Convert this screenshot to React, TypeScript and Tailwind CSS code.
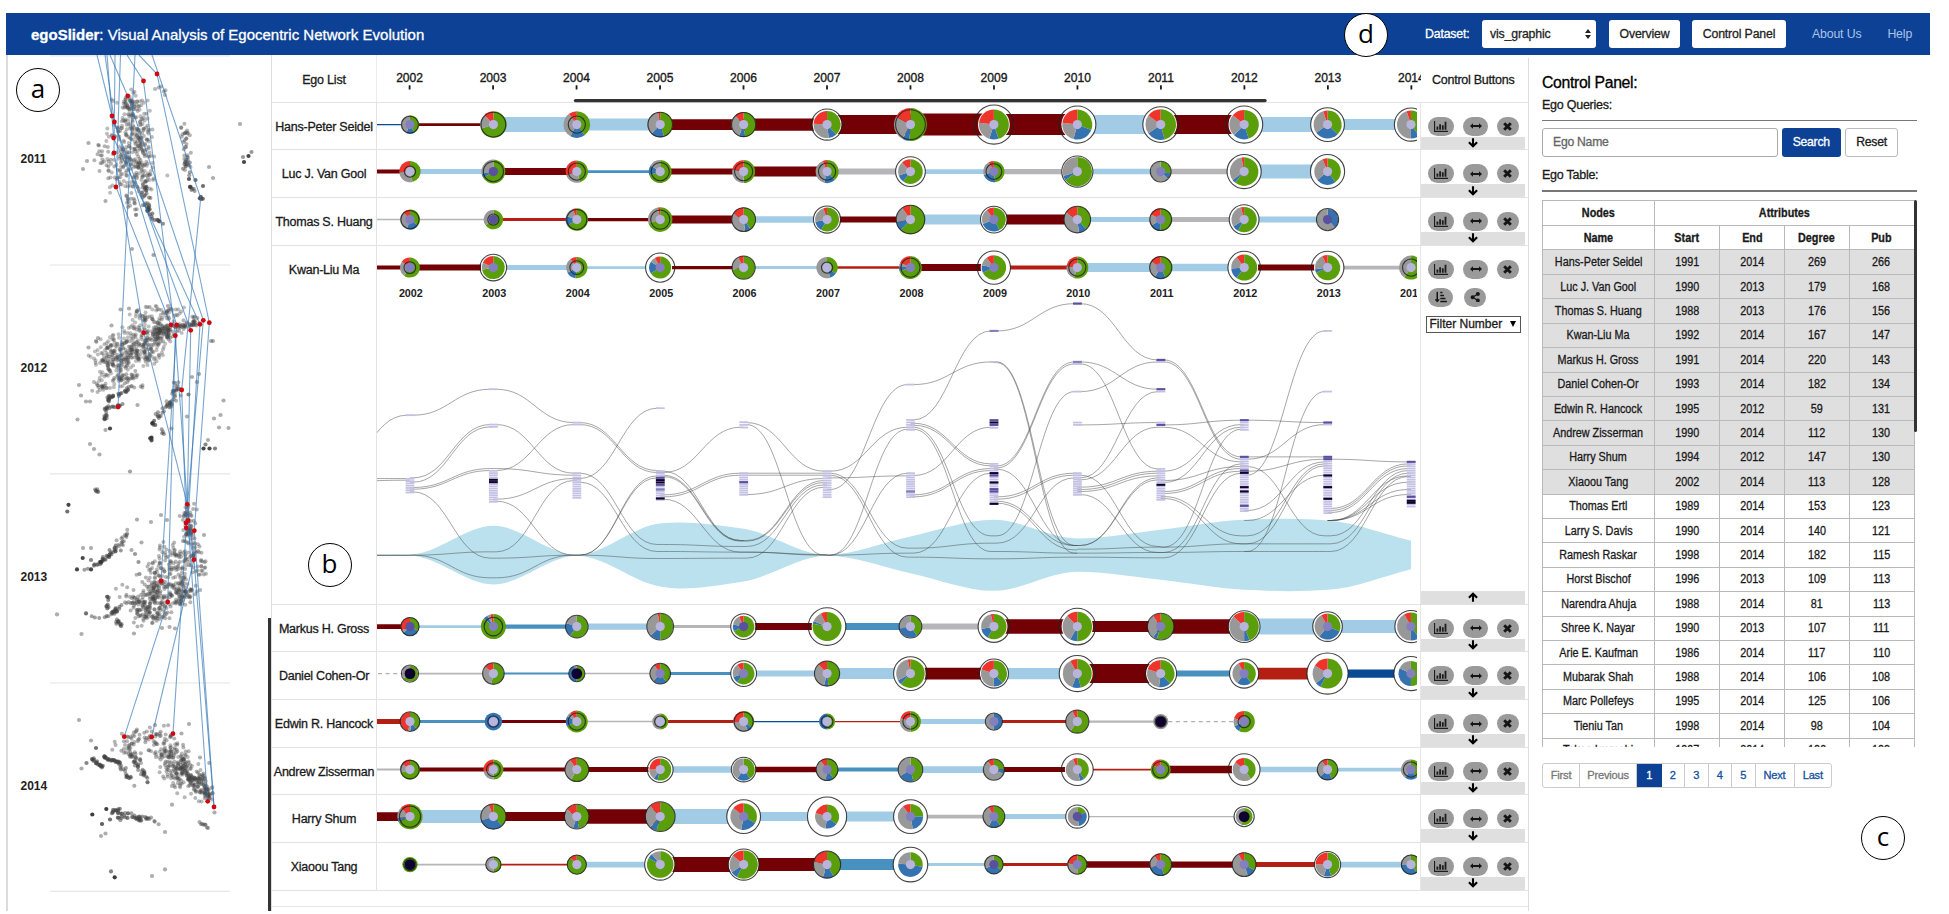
import React from "react";
import { FaShareAlt, FaSortAmountDownAlt } from "react-icons/fa";

type Tone = "L" | "M" | "D" | "K";
type LinkKind = "lb" | "mb" | "db" | "dr" | "rd" | "gy" | "da" | "";
// radius, outline radius, green, blue, grey, red, core tone, link kind, link width
type Glyph = [number, number, number, number, number, number, Tone, LinkKind, number];

const TONE: Record<Tone, string> = { L: "#b8b5dd", M: "#8480bf", D: "#5a50a0", K: "#10002f" };
const LINK: Record<string, string> = {
  lb: "#a2cbe5", mb: "#4790c0", db: "#0a4a93", dr: "#720004", rd: "#b31f12", gy: "#b6b5b7", da: "#b0b0b0",
};
const SLICE = ["#5a9e0b", "#3572b0", "#989898", "#ee352c"];
const YEARS = [2002, 2003, 2004, 2005, 2006, 2007, 2008, 2009, 2010, 2011, 2012, 2013, 2014];
const yx = (i: number) => 409.6 + 83.48 * i;

interface Ego { name: string; lead: [LinkKind, number]; glyphs: (Glyph | null)[] }

const EGOS: Ego[] = [
  { name: "Hans-Peter Seidel", lead: ["db", 1.3], glyphs: [
    [9.3, 8.8, .42, .15, .43, 0, "M", "dr", 2.7], [13.3, 12.8, .7, 0, .18, .12, "L", "lb", 15],
    [13.3, 9, .4, .18, .32, .1, "L", "lb", 12], [12.7, 12.7, .45, .17, .35, .03, "L", "dr", 10.7],
    [12.5, 12.5, .48, .08, .32, .12, "L", "dr", 12.3], [13.5, 16, .38, .1, .28, .24, "L", "dr", 19],
    [16.5, 15.3, .51, .07, .25, .17, "L", "dr", 22], [15, 20, .45, .1, .22, .23, "L", "dr", 21],
    [15, 19, .31, .23, .23, .23, "L", "lb", 19], [15.3, 18.3, .46, .19, .2, .15, "L", "dr", 19],
    [14.7, 19, .45, .17, .24, .14, "L", "lb", 15], [14, 17.3, .37, .28, .3, .05, "L", "lb", 11],
    [14, 17, .4, .1, .45, .05, "L", "", 0]] },
  { name: "Luc J. Van Gool", lead: ["dr", 4], glyphs: [
    [10.7, 6, .46, 0, .28, .26, "L", "lb", 5], [12, 10.5, .66, .06, .28, 0, "D", "dr", 7],
    [11.2, 9, .45, 0, .25, .3, "L", "mb", 2.7], [11.5, 9.5, .7, .14, .16, 0, "L", "dr", 6],
    [11.5, 9.5, .5, 0, .28, .22, "L", "dr", 10], [11.5, 9, .38, .16, .4, .06, "L", "gy", 6],
    [12.3, 15.3, .6, .1, .18, .12, "L", "lb", 4.7], [10.7, 8.3, .48, .22, .22, .08, "M", "gy", 5.3],
    [14.7, 16, .65, .05, .3, 0, "L", "lb", 5.5], [10, 10.8, .28, .1, .62, 0, "M", "gy", 5.5],
    [14.3, 17.5, .61, .04, .32, .03, "L", "lb", 14], [13.3, 17.5, .4, .24, .3, .06, "L", "", 0]] },
  { name: "Thomas S. Huang", lead: ["gy", 1.5], glyphs: [
    [10, 9.5, .35, .2, .33, .12, "M", "gy", 1.5], [9.7, 6, .65, 0, .35, 0, "D", "rd", 3],
    [11.3, 10.5, .66, .14, .14, .06, "L", "dr", 3.3], [12.3, 10, .7, 0, .27, .03, "L", "dr", 8],
    [12, 12.3, .4, .08, .35, .17, "L", "lb", 6.5], [12, 14, .58, .14, .23, .05, "L", "dr", 6],
    [14.5, 14.7, .62, .1, .18, .1, "L", "lb", 10], [12, 13.8, .42, .27, .21, .1, "M", "dr", 10],
    [13.3, 13.7, .38, .1, .36, .16, "L", "lb", 5], [11.3, 11.3, .5, .16, .17, .17, "M", "gy", 5],
    [12.7, 15.3, .58, .08, .3, .04, "L", "lb", 6], [10.7, 11.5, 0, .38, .62, 0, "D", "", 0]] },
  { name: "Kwan-Liu Ma", lead: ["dr", 4], glyphs: [
    [10, 6.3, .6, 0, .25, .15, "M", "dr", 6], [11.5, 13.7, .72, 0, .1, .18, "M", "lb", 5],
    [10.7, 7.3, .52, .15, .23, .1, "L", "lb", 2.7], [11, 15, .66, .18, .08, .08, "M", "dr", 3.3],
    [11.5, 12, .72, 0, .2, .08, "L", "lb", 3], [10.7, 6, .35, .1, .55, 0, "L", "rd", 2.5],
    [11.5, 10, .7, .06, .06, .18, "M", "dr", 7], [12.3, 17, .68, .1, .12, .1, "M", "rd", 4],
    [11, 9, .55, 0, .22, .23, "L", "lb", 9], [11.3, 11.5, .43, .16, .25, .16, "M", "lb", 7.5],
    [13, 16.7, .6, .14, .16, .1, "L", "dr", 6], [12.7, 16.7, .68, .05, .2, .07, "L", "gy", 3.7],
    [12, 9, .6, 0, .4, 0, "L", "", 0]] },
  { name: "Markus H. Gross", lead: ["dr", 4.7], glyphs: [
    [9.3, 9.5, .33, .3, .05, .32, "D", "lb", 2.7], [12.5, 9.7, .86, .06, .04, .04, "M", "mb", 4.3],
    [11, 11.7, .6, .2, .2, 0, "L", "lb", 6.3], [13, 13.8, .5, .13, .34, .03, "L", "gy", 3],
    [10.8, 13.3, .68, .1, .15, .07, "D", "dr", 7], [14.5, 19.2, .78, .03, .12, .07, "L", "mb", 7],
    [11, 11.8, .4, .32, .28, 0, "L", "gy", 6], [12.7, 16.2, .58, .14, .24, .04, "L", "dr", 14.5],
    [14.8, 18.7, .5, .08, .3, .12, "L", "dr", 11], [13, 13.8, .55, .05, .3, .1, "M", "dr", 14.5],
    [14.7, 16.3, .44, .06, .37, .13, "L", "lb", 16], [13, 15.2, .31, .3, .31, .08, "M", "lb", 13],
    [14, 16.5, .4, .1, .42, .08, "M", "", 0]] },
  { name: "Daniel Cohen-Or", lead: ["da", 1.3], glyphs: [
    [8, 9, .65, 0, .35, 0, "K", "gy", 1.7], [10.5, 11.2, .53, 0, .33, .14, "L", "mb", 2],
    [8, 8.5, .5, .45, .05, 0, "K", "gy", 1.5], [10, 10.7, .4, .22, .28, .1, "M", "mb", 3],
    [10.8, 13.3, .6, .1, .2, .1, "M", "lb", 6], [12.5, 13, .48, .06, .34, .12, "L", "lb", 11],
    [14.3, 17.3, .62, .05, .3, .03, "L", "dr", 11.7], [13, 15, .38, .12, .3, .2, "L", "lb", 11.3],
    [14.5, 18.5, .46, .1, .36, .08, "L", "dr", 19], [13.7, 16.3, .38, .14, .28, .2, "L", "mb", 6],
    [11.7, 15, .4, .2, .32, .08, "M", "rd", 11.7], [15, 21, .58, .06, .2, .16, "L", "db", 8.3],
    [12.5, 17.5, .5, .32, .18, 0, "M", "", 0]] },
  { name: "Edwin R. Hancock", lead: ["rd", 5], glyphs: [
    [9.7, 10.3, .38, .1, .05, .47, "L", "mb", 3], [8.8, 6, 0, 1, 0, 0, "L", "dr", 3],
    [11, 9, .68, .15, .07, .1, "L", "gy", 1.5], [8, 6, .5, 0, .5, 0, "L", "rd", 3],
    [10.5, 10, .35, .08, .32, .25, "L", "db", 1.3], [8, 6.3, .5, .5, 0, 0, "L", "rd", 1.3],
    [10.5, 8, .5, 0, .3, .2, "L", "lb", 5], [8.5, 9, 0, .5, .5, 0, "M", "rd", 3],
    [11.5, 12, .6, 0, .33, .07, "L", "gy", 2.2], [7.6, 6, 0, 0, 1, 0, "K", "da", 1.3],
    [10.7, 6.5, .58, .1, .12, .2, "M", "", 0]] },
  { name: "Andrew Zisserman", lead: ["gy", 2], glyphs: [
    [10, 9.7, .7, 0, .15, .15, "L", "dr", 4], [10, 7.3, .5, 0, .22, .28, "L", "dr", 4],
    [12, 12.3, .58, 0, .32, .1, "L", "dr", 5], [11, 13.3, .54, .06, .15, .25, "L", "lb", 6.5],
    [11, 12.7, .4, .2, .4, 0, "L", "dr", 5.5], [11, 11.3, .4, .12, .38, .1, "M", "mb", 4],
    [12, 12.7, .46, .2, .34, 0, "M", "lb", 6.7], [10.3, 11, .24, .08, .58, .1, "L", "dr", 5],
    [11.5, 16.3, .4, .06, .48, .06, "L", "rd", 1.7], [10, 8.5, .83, 0, 0, .17, "M", "dr", 7.5],
    [11.5, 16.3, .4, 0, .46, .14, "L", "lb", 5.5], [10.3, 10.7, .43, .2, .28, .09, "L", "lb", 3.7],
    [10, 8, .4, .2, .4, 0, "M", "", 0]] },
  { name: "Harry Shum", lead: ["dr", 8.7], glyphs: [
    [12.7, 11, .68, .05, .14, .13, "L", "lb", 13], [12.7, 13, .38, .32, .24, .06, "L", "dr", 9],
    [12, 12.8, .47, .08, .3, .15, "L", "dr", 14.5], [14.7, 15.3, .54, .08, .26, .12, "L", "lb", 15],
    [13.3, 17.3, .33, .2, .33, .14, "M", "lb", 9], [12, 20, .36, .16, .28, .2, "L", "lb", 10],
    [12.7, 17.3, .25, .22, .43, .1, "M", "gy", 3.7], [10.7, 11.3, .4, .18, .34, .08, "M", "lb", 5],
    [9.5, 12, .17, .3, .53, 0, "D", "gy", 1.2], null, [8.5, 10.5, .55, 0, .45, 0, "K", "", 0]] },
  { name: "Xiaoou Tang", lead: ["", 0], glyphs: [
    [7.7, 6.5, 1, 0, 0, 0, "K", "gy", 1.7], [8, 8, .5, 0, .5, 0, "L", "rd", 1.7],
    [9.7, 10, .88, 0, 0, .12, "L", "lb", 5.7], [13.3, 16, .83, .06, .11, 0, "L", "dr", 15],
    [14.2, 16, .58, .08, .2, .14, "L", "dr", 13], [13.7, 14, .42, .13, .24, .21, "L", "mb", 11],
    [12.3, 17.7, .28, .48, .24, 0, "L", "lb", 3], [9.3, 9.7, .35, .33, .32, 0, "D", "rd", 3],
    [10, 10, .5, 0, .28, .22, "M", "dr", 6.5], [11, 11.3, .45, .25, .2, .1, "M", "dr", 6.3],
    [12, 12.3, .33, .12, .47, .08, "M", "rd", 5], [12, 13.5, .45, .1, .2, .25, "L", "lb", 5.7],
    [10, 10, .4, .35, .25, 0, "L", "", 0]] },
];

function Donut({ x, y, g }: { x: number; y: number; g: Glyph }) {
  const [r, outline, ...rest] = g;
  const parts = rest.slice(0, 4) as number[];
  let a = 0;
  const arcs = parts.map((p, i) => {
    const s = a;
    a += p;
    if (p <= 0) return null;
    if (p >= 0.999) return <circle key={i} cx={x} cy={y} r={r} fill={SLICE[i]} />;
    const pt = (t: number) => `${x + r * Math.sin(2 * Math.PI * t)} ${y - r * Math.cos(2 * Math.PI * t)}`;
    return <path key={i} fill={SLICE[i]} d={`M${x} ${y}L${pt(s)}A${r} ${r} 0 ${p > 0.5 ? 1 : 0} 1 ${pt(a)}Z`} />;
  });
  return (
    <g>
      {arcs}
      <circle cx={x} cy={y} r={g[6] === "K" ? 5.4 : 4.6} fill={TONE[g[6]]} />
      <circle cx={x} cy={y} r={outline - 0.4} fill="none" stroke="#222" strokeOpacity={0.85} strokeWidth={1.1} />
    </g>
  );
}

function Timeline({ ego, cy = 21.6 }: { ego: Ego; cy?: number }) {
  const links: { x1: number; x2: number; k: LinkKind; w: number }[] = [];
  if (ego.lead[0]) links.push({ x1: 370, x2: yx(0), k: ego.lead[0], w: ego.lead[1] });
  ego.glyphs.forEach((g, i) => {
    if (!g || !g[7]) return;
    const n = ego.glyphs[i + 1] ? i + 1 : i + 2;
    links.push({ x1: yx(i), x2: yx(n), k: g[7], w: g[8] });
  });
  const draw = (l: (typeof links)[number], i: number) => (
    <line key={i} x1={l.x1} x2={l.x2} y1={cy} y2={cy} stroke={LINK[l.k]} strokeWidth={l.w}
      strokeDasharray={l.k === "da" ? "4 3.6" : undefined} />
  );
  return (
    <g>
      {links.filter((l) => l.k !== "dr").map(draw)}
      {ego.glyphs.map((g, i) => g && g[1] > g[0] + 1.2 && <circle key={i} cx={yx(i)} cy={cy} r={g[1] - 0.5} fill="#fff" />)}
      {links.filter((l) => l.k === "dr").map(draw)}
      {ego.glyphs.map((g, i) => g && g[1] > g[0] + 1.2 && <circle key={i} cx={yx(i)} cy={cy} r={g[0] + 0.9} fill="#fff" />)}
      {ego.glyphs.map((g, i) => g && <Donut key={i} x={yx(i)} y={cy} g={g} />)}
    </g>
  );
}

// [start level, end level] pairs between consecutive years, starting at 2001-2002
const FLOWS: [number, number][][] = [
  [[580, 406], [596, 596], [606, 601], [826, 826], [827, 827]],
  [[406, 328], [594, 434], [607, 441], [623, 566], [628, 572], [636, 835], [826, 816], [826, 894]],
  [[328, 428], [434, 580], [566, 586], [572, 434], [658, 596], [664, 826], [816, 602], [835, 826], [894, 826]],
  [[428, 572], [434, 578], [580, 794], [607, 815], [596, 385], [826, 588], [826, 594], [826, 836]],
  [[574, 782], [578, 442], [586, 782], [590, 784], [645, 580], [651, 586], [658, 817], [794, 800], [815, 817], [836, 835]],
  [[428, 574], [434, 826], [580, 580], [586, 586], [644, 596], [782, 602], [784, 608], [800, 615], [817, 826], [817, 824], [835, 622]],
  [[574, 442], [580, 805], [586, 832], [594, 588], [629, 314], [826, 448], [826, 580], [826, 820]],
  [[314, 246], [420, 153], [430, 552], [436, 558], [442, 768], [448, 815], [587, 442], [645, 566], [651, 572], [805, 790], [820, 580], [832, 837]],
  [[153, 71], [246, 797], [248, 820], [558, 246], [564, 252], [568, 797], [651, 580], [658, 586], [664, 797], [670, 810], [768, 335], [790, 594], [815, 820], [837, 832]],
  [[71, 240], [246, 328], [252, 567], [335, 246], [435, 428], [594, 335], [600, 442], [586, 800], [622, 574], [629, 580], [635, 588], [644, 818], [797, 594], [797, 600], [808, 802], [820, 818], [832, 834]],
  [[240, 531], [246, 538], [435, 421], [442, 546], [574, 434], [602, 560], [608, 442], [635, 566], [641, 574], [650, 768], [656, 792], [802, 792], [802, 448], [818, 815], [818, 552], [834, 580]],
  [[421, 428], [531, 531], [538, 434], [574, 538], [586, 153], [560, 768], [692, 546], [722, 586], [768, 552], [792, 558], [792, 792], [815, 815], [815, 335]],
  [[538, 546], [686, 552], [692, 558], [698, 566], [722, 588], [722, 607], [722, 629], [722, 644], [768, 572], [792, 580], [815, 590]],
];

// year index, first level, last level, shaded levels
const STACKS: [number, number, number, Record<number, Tone>?][] = [
  [0, 406, 406], [0, 597, 638], [1, 328, 328], [1, 434, 441], [1, 573, 666, { 600: "K", 607: "K" }],
  [2, 428, 434], [2, 580, 654], [3, 385, 385], [3, 574, 660, { 594: "D", 601: "K", 608: "K", 615: "D", 629: "M", 656: "K" }],
  [4, 427, 443], [4, 580, 645, { 607: "D" }], [5, 574, 652], [6, 314, 314], [6, 420, 450], [6, 580, 652, { 635: "M" }],
  [7, 153, 153, { 153: "M" }], [7, 246, 246], [7, 421, 444, { 421: "D", 428: "K", 435: "D" }],
  [7, 552, 673, { 580: "K", 587: "D", 608: "K", 628: "D", 635: "D", 672: "K" }],
  [8, 71, 71, { 71: "D" }], [8, 246, 252, { 246: "M" }], [8, 335, 335], [8, 428, 435], [8, 580, 645],
  [9, 240, 246, { 240: "D" }], [9, 328, 335, { 328: "D" }], [9, 428, 435, { 435: "D" }], [9, 567, 660, { 615: "K" }],
  [10, 421, 450, { 421: "D" }], [10, 531, 694, { 531: "D", 572: "D", 579: "K", 622: "K", 635: "K", 678: "D" }],
  [11, 153, 153], [11, 335, 335], [11, 428, 434, { 428: "D" }], [11, 531, 700, { 531: "D", 538: "D", 587: "K", 622: "K", 657: "K" }],
  [12, 546, 680, { 546: "D", 651: "D", 663: "K", 669: "K" }],
];

const lv = (z: number) => 34 + z / 3;

// x, upper level, lower level
const STREAM: [number, number, number][] = [
  [370, 824, 828], [yx(0), 824, 828], [yx(1), 738, 914], [yx(2), 825, 828], [yx(3), 731, 920], [679, 728, 926], [yx(4), 747, 905],
  [yx(5), 825, 828], [yx(6), 770, 880], [yx(7), 720, 933], [yx(8), 776, 876], [yx(9), 750, 900],
  [yx(10), 720, 930], [1290, 717, 934], [yx(11), 722, 930], [yx(12), 783, 868],
];

function monotone(pts: [number, number][]) {
  const n = pts.length;
  const m = pts.map((p, i) => {
    if (i === 0 || i === n - 1) return 0;
    const a = (p[1] - pts[i - 1][1]) / (p[0] - pts[i - 1][0]);
    const b = (pts[i + 1][1] - p[1]) / (pts[i + 1][0] - p[0]);
    return a * b <= 0 ? 0 : (2 * a * b) / (a + b);
  });
  m[n - 1] = (pts[n - 1][1] - pts[n - 2][1]) / (pts[n - 1][0] - pts[n - 2][0]);
  return m;
}

function streamPath() {
  const up = STREAM.map(([x, a]) => [x, lv(a)] as [number, number]);
  const dn = STREAM.map(([x, , b]) => [x, lv(b)] as [number, number]);
  const mu = monotone(up), md = monotone(dn);
  let d = `M${up[0][0]} ${up[0][1]}`;
  for (let k = 1; k < up.length; k++) {
    const p = up[k], q = up[k - 1], h = (p[0] - q[0]) / 3;
    d += `C${q[0] + h} ${q[1] + mu[k - 1] * h} ${p[0] - h} ${p[1] - mu[k] * h} ${p[0]} ${p[1]}`;
  }
  d += `L${dn[dn.length - 1][0]} ${dn[dn.length - 1][1]}`;
  for (let k = dn.length - 1; k > 0; k--) {
    const p = dn[k - 1], q = dn[k], h = (q[0] - p[0]) / 3;
    d += `C${q[0] - h} ${q[1] - md[k] * h} ${p[0] + h} ${p[1] + md[k - 1] * h} ${p[0]} ${p[1]}`;
  }
  return d + "Z";
}

function FlowChart() {
  return (
    <g>
      <path d={streamPath()} fill="#bae1ed" />
      <g fill="none" stroke="#444" strokeOpacity={0.5} strokeWidth={0.95}>
        {FLOWS.flatMap((set, k) => set.map(([a, b], j) => {
          const x1 = yx(k - 1) + 3, x2 = yx(k) - 3, c = (x2 - x1) * 0.46;
          return <path key={`${k}-${j}`} d={`M${x1 - 3} ${lv(a)}H${x1}C${x1 + c} ${lv(a)} ${x2 - c} ${lv(b)} ${x2} ${lv(b)}H${x2 + 3}`} />;
        }))}
      </g>
      {STACKS.flatMap(([i, from, to, marks], s) => {
        const n = Math.round((to - from) / 6.8) + 1;
        const step = n > 1 ? (to - from) / (n - 1) : 0;
        const items = Array.from({ length: n }, (_, k) => (
          <rect key={`${s}-${k}`} x={yx(i) - 4.3} y={lv(from + k * step) - 0.9} width={8.8} height={1.75} fill="#c3c1e4" />
        ));
        const dark = Object.entries(marks ?? {}).map(([z, t]) => (
          <rect key={`${s}m${z}`} x={yx(i) - 4.3} y={lv(Number(z)) - 1.1} width={8.8} height={2.1} fill={TONE[t]} />
        ));
        return [...items, ...dark];
      })}
      {YEARS.map((y, i) => (
        <text key={y} x={yx(i) + 1} y={51} textAnchor="middle" fontSize={10.8} fontWeight={700} fill="#222">{y}</text>
      ))}
    </g>
  );
}

// ---- left overview -------------------------------------------------------
function rng(seed: number) {
  let s = seed;
  return () => {
    s = (s * 1664525 + 1013904223) % 4294967296;
    return s / 4294967296;
  };
}

// x1, y1, x2, y2, spread, count, opacity
const CLOUDS: [number, number, number, number, number, number, number][] = [
  [134, 96, 128, 112, 8, 60, .36], [132, 112, 126, 175, 16, 220, .36], [143, 115, 142, 175, 9, 80, .36], [102, 150, 105, 170, 6, 26, .4],
  [118, 170, 150, 180, 12, 60, .36], [128, 195, 136, 214, 4, 20, .4], [143, 182, 147, 210, 4, 32, .5], [150, 208, 152, 218, 2, 12, .6], [154, 219, 166, 224, 1, 8, .6],
  [155, 85, 168, 92, 3, 7, .4], [184, 125, 188, 168, 3.5, 38, .4], [187, 160, 192, 190, 3, 18, .5], [200, 197, 203, 200, 1, 5, .8],
  [118, 352, 172, 322, 14, 210, .34], [136, 318, 180, 311, 6, 55, .34], [104, 345, 112, 380, 11, 105, .34], [110, 365, 130, 352, 10, 80, .34], [130, 352, 158, 352, 10, 90, .36],
  [155, 336, 172, 328, 6, 80, .4], [175, 327, 198, 321, 4, 48, .4], [95, 385, 107, 388, 4, 22, .38], [115, 380, 135, 375, 4, 30, .42],
  [129, 390, 110, 397, 1.5, 20, .55], [110, 396, 106, 408, 1.5, 14, .55], [104, 409, 123, 405, 1, 16, .55], [106, 412, 106, 420, 1.5, 12, .5],
  [130, 388, 145, 386, 1.5, 8, .4], [178, 383, 172, 402, 3.5, 28, .42], [172, 402, 158, 415, 3, 24, .5], [153, 420, 154, 426, 1, 6, .7], [151, 436, 152, 441, 1, 4, .8], [161, 428, 164, 436, 1, 4, .5],
  [187, 505, 190, 540, 5, 66, .4], [178, 545, 180, 600, 9, 140, .38], [192, 540, 200, 575, 6, 50, .38], [163, 555, 155, 605, 11, 120, .38],
  [150, 585, 160, 612, 10, 85, .4], [130, 593, 150, 612, 9, 80, .4], [180, 600, 195, 590, 6, 35, .4],
  [128, 527, 120, 545, 3, 18, .42], [120, 545, 98, 565, 2.4, 34, .55], [98, 565, 84, 568, 1.5, 7, .5], [108, 594, 107, 610, 1, 10, .6],
  [122, 606, 112, 614, 1.5, 22, .5], [110, 616, 92, 617, 1.2, 7, .5], [118, 620, 122, 627, 2.5, 14, .5], [130, 616, 160, 618, 6, 36, .4], [94, 489, 100, 493, 1, 7, .5],
  [112, 742, 160, 735, 6, 42, .4], [125, 748, 140, 758, 5, 36, .42], [155, 750, 185, 765, 9, 100, .38], [165, 770, 200, 780, 10, 100, .38], [180, 765, 205, 795, 7, 85, .38],
  [195, 775, 208, 795, 6, 50, .4], [160, 735, 180, 750, 8, 40, .4], [205, 788, 210, 800, 2, 16, .4], [103, 757, 118, 762, 1, 24, .55], [118, 762, 131, 780, 2, 26, .5],
  [92, 759, 103, 768, 1.2, 24, .55], [134, 760, 150, 785, 2, 28, .5], [112, 812, 120, 810, 2, 14, .6], [118, 815, 148, 818, 3, 45, .5], [148, 818, 158, 824, 1.2, 7, .45], [198, 822, 208, 827, 1.5, 9, .45],
];

const SINGLES: [number, number, number][] = [
  [240, 124, .4], [243, 157, .5], [248.5, 156, .9], [244, 162, .9], [251.5, 152, .5], [88.5, 143, .4], [83, 169, .4], [87, 161, .4], [213, 178, .4], [209, 167, .4], [132, 249, .4], [153.5, 255, .45], [105.5, 201, .4], [189, 179, .8], [190, 187, .8], [195.5, 180, .7], [203, 186, .7],
  [79, 385, .4], [81, 395.5, .4], [86, 401.5, .4], [90, 401.5, .4], [77.5, 419.5, .4], [110, 428.5, .9], [105.5, 430, .4], [90, 444, .4], [94, 449, .4], [99.5, 454.5, .4], [130, 471.5, .45], [137.5, 405, .4],
  [152.5, 423, .9], [151.5, 437.5, .9], [203.5, 448.5, .9], [209.5, 448.5, .9], [215, 448.5, .6], [205.5, 444.5, .6], [208, 440, .4], [223.5, 400.5, .4], [220.5, 415, .4], [214, 418.5, .4], [219, 427.5, .4], [228.5, 428, .4], [211, 341, .4], [213, 341, .4],
  [88.5, 347.5, .4], [98, 338, .4], [111.5, 325.5, .4], [120.5, 309.5, .4], [129, 308.5, .4], [137, 311.5, .5], [149.5, 307, .4], [168, 306, .4], [96, 341, .4],
  [199, 374, .4], [192, 377, .4], [197, 382, .4], [188.5, 394.5, .6], [187, 416.5, .4], [171.5, 428.5, .4], [68.5, 504.8, .9], [67.3, 511.5, .7], [77, 569.4, .9], [91, 569.4, .9], [82.7, 558, .9], [91, 560, .6], [83, 548, .4], [91, 548, .4], [101, 562, .9], [109, 557, .7],
  [137, 519.6, .4], [151, 522, .4], [161, 515, .4], [167, 520, .4], [141.5, 542.5, .4], [131.5, 550, .4], [135, 554, .5], [138.5, 562, .5], [139.5, 574, .5], [57, 614.4, .4], [81.5, 634, .4], [86, 613.4, .7], [134, 633.5, .4], [162, 628, .4], [169.5, 627, .4], [175, 628.5, .4], [204, 535, .4],
  [79, 720, .4], [91, 740.5, .4], [96, 748, .7], [86.5, 763, .6], [81.5, 768.5, .4], [189, 724, .4], [155, 725, .4], [181.5, 733.5, .4], [92.3, 814.5, .95], [106.3, 809, .95], [102, 824, .8], [110, 819.5, .7], [101, 836, .4], [105.5, 833.5, .4], [165, 832, .4],
  [111, 871.4, .6], [114.7, 877.3, .95], [152, 876, .4], [165, 869.4, .4], [172, 804.7, .4], [134.3, 785.8, .4], [200, 757.5, .4], [209.3, 763, .4], [214.5, 812.5, .4],
];

const REDS: [number, number][] = [
  [157, 74], [143.5, 81], [127.7, 96], [112, 116], [114.4, 122], [113.6, 138], [114, 153], [116, 187],
  [143.7, 332.7], [171, 325], [176.7, 325], [175.3, 335.7], [190.7, 330.3], [200, 324.3], [203.3, 320.3], [209.3, 322.7], [181.7, 390], [118, 407],
  [187.3, 504.3], [188, 520.7], [186, 523], [186.3, 528], [194.3, 530.7], [194, 559.7], [161, 581], [167.7, 602],
  [124.3, 736.7], [151.7, 737], [173, 733.7], [207.7, 801.3], [214, 807],
];

const TRACKS = [
  "97,55 112,116 190.7,330.3 187.3,504.3", "105,55 114.4,122 176.7,325 161,581", "107,55 113.6,138 200,324.3 188,520.7 207.7,801.3",
  "110,55 127.7,96", "115,55 114,153 143.7,332.7 187.3,504.3", "120.5,55 116,187 171,325", "127,55 143.5,81 175.3,335.7 167.7,602 124.3,736.7",
  "135,55 118,407", "139,55 157,74 209.3,322.7 194.3,530.7 214,807", "152,55 200.7,198 181.7,390 186.3,528 173,733.7",
  "127.7,96 203.3,320.3 186,523 194,559.7 151.7,737", "175.3,335.7 187.3,504.3 194,559.7 214,807",
];

function Overview() {
  const r = rng(11);
  const gauss = () => (r() + r() + r() - 1.5) * 1.35;
  return (
    <svg className="block h-[856px] w-[262px] shrink-0" viewBox="8 55 262 856">
      {[55.8, 265, 473.8, 683, 891.3].map((y) => (
        <line key={y} x1={50} x2={230} y1={y} y2={y} stroke="#e6e6e6" strokeWidth={1.2} />
      ))}
      {CLOUDS.map(([x1, y1, x2, y2, sp, n, o], c) => (
        <g key={c} fill="#444" fillOpacity={o}>
          {Array.from({ length: Math.round(n * 0.88) }, (_, i) => {
            const t = r();
            return <circle key={i} cx={x1 + (x2 - x1) * t + gauss() * sp} cy={y1 + (y2 - y1) * t + gauss() * sp} r={2} />;
          })}
        </g>
      ))}
      {SINGLES.map(([x, y, o], i) => <circle key={i} cx={x} cy={y} r={2.1} fill="#333" fillOpacity={o} />)}
      <g fill="none" stroke="#2f74b5" strokeOpacity={0.65} strokeWidth={1.1}>
        {TRACKS.map((t, i) => <polyline key={i} points={t} />)}
      </g>
      {REDS.map(([x, y], i) => <circle key={i} cx={x} cy={y} r={2.4} fill="#cf0a0f" />)}
      <g fontSize={12} fontWeight={700} fill="#222">
        <text x={20.5} y={162.5}>2011</text>
        <text x={20.5} y={371.5}>2012</text>
        <text x={20.5} y={580.5}>2013</text>
        <text x={20.5} y={789.5}>2014</text>
      </g>
    </svg>
  );
}

// ---- controls ------------------------------------------------------------
function BarIcon() {
  return (
    <svg className="h-[11px] w-[14px]" viewBox="0 0 14 11" fill="#1c1c1c">
      <path d="M0 0h1.1v9.8H14V11H0z" />
      <path d="M2.5 5.6h1.8v3.2H2.5zM5.2 3.2H7v5.6H5.2zM7.9 4.2h1.8v4.6H7.9zM10.6.8h1.8v8h-1.8z" />
    </svg>
  );
}

function SpanIcon() {
  return (
    <svg className="h-[6px] w-[12px]" viewBox="0 0 12 6" fill="#151515">
      <path d="M0 3L3 .2v1.9h6V.2L12 3 9 5.8V3.9H3v1.9z" />
    </svg>
  );
}

function CrossIcon() {
  return (
    <svg className="h-[9px] w-[9px]" viewBox="0 0 9 9" stroke="#151515" strokeWidth={2.9}>
      <path d="M1.2 1.2l6.6 6.6M7.8 1.2L1.2 7.8" />
    </svg>
  );
}

function ArrowIcon({ up }: { up?: boolean }) {
  return (
    <svg className={`h-[10px] w-[10px] ${up ? "rotate-180" : ""}`} viewBox="0 0 10 10" fill="none" stroke="#000" strokeWidth={2.1}>
      <path d="M5 .2v8M.9 4.2L5 8.3l4.1-4.1" />
    </svg>
  );
}

function Pill({ w, children }: { w: string; children: React.ReactNode }) {
  return <button className={`flex h-[19px] items-center justify-center rounded-[9.5px] bg-[#9a9a9a] text-[#151515] ${w}`}>{children}</button>;
}

function Controls({ open }: { open?: boolean }) {
  return (
    <div className="flex w-[107px] shrink-0 flex-col border-l border-[#e6e6e6]">
      <div className="flex pl-[7px] pt-[14px]">
        <Pill w="w-[26px]"><BarIcon /></Pill>
        <div className="w-[9px]" />
        <Pill w="w-[25px]"><SpanIcon /></Pill>
        <div className="w-[8.5px]" />
        <Pill w="w-[22.5px]"><CrossIcon /></Pill>
      </div>
      {open && (
        <>
          <div className="flex gap-[10.5px] pl-[7px] pt-[9px]">
            <Pill w="w-[25px]"><FaSortAmountDownAlt size={12} /></Pill>
            <Pill w="w-[22.5px]"><FaShareAlt size={10.5} /></Pill>
          </div>
          <div className="ml-[4.5px] mt-[9px] flex h-[17px] w-[95px] items-center justify-between whitespace-nowrap border border-[#555] pl-[3px] pr-[4px] text-[12px] leading-none">
            <span>Filter Number</span>
            <svg className="h-[6px] w-[6px]" viewBox="0 0 6 6"><path d="M0 0h6L3 6z" /></svg>
          </div>
        </>
      )}
      <div className="mt-auto flex h-[12.7px] w-[104px] items-center justify-center bg-[#dfdfdf] text-black">
        <ArrowIcon up={open} />
      </div>
    </div>
  );
}

function EgoRow({ ego, open }: { ego: Ego; open?: boolean }) {
  const h = open ? 359.2 : 47.63;
  return (
    <div className={`flex border-b border-[#e3e3e3] ${open ? "h-[359.2px]" : "h-[47.63px]"}`}>
      <div className="w-[105px] shrink-0 whitespace-nowrap border-r border-[#e3e3e3] pt-[15px] text-center text-[12.5px] leading-[18px] tracking-[-0.24px]">{ego.name}</div>
      <div className="w-[1043px] shrink-0">
        <svg className={`block w-[1040px] ${open ? "h-[358px]" : "h-[46.6px]"}`} viewBox={`377 0 1040 ${h - 1}`}>
          <Timeline ego={ego} />
          {open && <FlowChart />}
        </svg>
      </div>
      <Controls open={open} />
    </div>
  );
}

function EgoPanel() {
  return (
    <main className="flex w-[1256px] shrink-0 flex-col">
      <div className="flex h-[47.7px] border-b border-[#e3e3e3]">
        <div className="w-[105px] shrink-0 border-r border-[#ececec] pt-[15.5px] text-center text-[12.5px] leading-[18px] tracking-[-0.2px]">Ego List</div>
        <svg className="block h-[48px] w-[1047px] shrink-0" viewBox="377 55 1047 48">
          <clipPath id="axis"><rect x={377} y={55} width={1044} height={48} /></clipPath>
          <g clipPath="url(#axis)">
            {YEARS.map((y, i) => (
              <g key={y}>
                <text x={yx(i)} y={81.5} textAnchor="middle" fontSize={12.1} fill="#1a1a1a" stroke="#1a1a1a" strokeWidth={0.35}>{y}</text>
                <rect x={yx(i) - 0.9} y={85.3} width={1.8} height={4.2} fill="#1a1a1a" />
              </g>
            ))}
          </g>
          <line x1={575.5} x2={1265} y1={100.6} y2={100.6} stroke="#333" strokeWidth={3.4} strokeLinecap="round" />
        </svg>
        <div className="whitespace-nowrap pl-[8px] pt-[15.5px] text-[12.5px] leading-[18px] tracking-[-0.25px]">Control Buttons</div>
      </div>
      {EGOS.map((e) => <EgoRow key={e.name} ego={e} open={e.name === "Kwan-Liu Ma"} />)}
      <div className="h-[16px] border-b border-[#e6e6e6]" />
    </main>
  );
}

const TABLE: [string, number, number, number, number][] = [
  ["Hans-Peter Seidel", 1991, 2014, 269, 266], ["Luc J. Van Gool", 1990, 2013, 179, 168], ["Thomas S. Huang", 1988, 2013, 176, 156],
  ["Kwan-Liu Ma", 1992, 2014, 167, 147], ["Markus H. Gross", 1991, 2014, 220, 143], ["Daniel Cohen-Or", 1993, 2014, 182, 134],
  ["Edwin R. Hancock", 1995, 2012, 59, 131], ["Andrew Zisserman", 1990, 2014, 112, 130], ["Harry Shum", 1994, 2012, 147, 130],
  ["Xiaoou Tang", 2002, 2014, 113, 128], ["Thomas Ertl", 1989, 2014, 153, 123], ["Larry S. Davis", 1990, 2014, 140, 121],
  ["Ramesh Raskar", 1998, 2014, 182, 115], ["Horst Bischof", 1996, 2013, 109, 113], ["Narendra Ahuja", 1988, 2014, 81, 113],
  ["Shree K. Nayar", 1990, 2013, 107, 111], ["Arie E. Kaufman", 1986, 2014, 117, 110], ["Mubarak Shah", 1988, 2014, 106, 108],
  ["Marc Pollefeys", 1995, 2014, 125, 106], ["Tieniu Tan", 1998, 2014, 98, 104], ["Takeo Igarashi", 1997, 2014, 106, 103],
];
const COLS = "grid grid-cols-[112px_65px_65px_64.5px_65px]";

function Cell({ children }: { children: React.ReactNode }) {
  return (
    <div className="flex items-center justify-center whitespace-nowrap border-b border-r border-[#b9b9b9]">
      <span className="scale-x-90">{children}</span>
    </div>
  );
}

function EgoTable() {
  return (
    <div className="relative mt-[8.5px] h-[547px] w-[375px] overflow-hidden">
      <div className="w-[372.5px] border-l border-t border-[#b9b9b9] text-[12px] leading-[14px]">
        <div className="grid h-[24.7px] grid-cols-[112px_259.5px] font-bold">
          <Cell>Nodes</Cell>
          <Cell>Attributes</Cell>
        </div>
        <div className={`h-[24.6px] font-bold ${COLS}`}>
          {["Name", "Start", "End", "Degree", "Pub"].map((t) => <Cell key={t}>{t}</Cell>)}
        </div>
        {TABLE.map((row, i) => (
          <div key={row[0]} className={`h-[24.42px] ${COLS} ${i < 10 ? "bg-[#dfdfdf]" : "bg-white"}`}>
            {row.map((v, j) => <Cell key={j}>{v}</Cell>)}
          </div>
        ))}
      </div>
      <div className="absolute right-0 top-0 h-[232px] w-[3.5px] rounded-[2px] bg-[#333]" />
    </div>
  );
}

function ControlPanel() {
  const page = "flex h-full items-center justify-center border-r border-[#ccc]";
  return (
    <aside className="mt-[3px] flex-1 border-l-[1.5px] border-[#dcdcdc] pl-[13px]">
      <h2 className="pt-[14.5px] text-[15.8px] leading-[20px] tracking-[-0.35px] text-black">Control Panel:</h2>
      <div className="pt-[4px] text-[12.5px] leading-[17px] tracking-[-0.25px]">Ego Queries:</div>
      <div className="mt-[6px] h-[1.6px] w-[375px] bg-[#777]" />
      <div className="mt-[7px] flex text-[12.2px] tracking-[-0.25px]">
        <div className="flex h-[28.5px] w-[236px] items-center rounded-[3px] border border-[#aaa] pl-[10px] text-[#666]">Ego Name</div>
        <button className="ml-[3.5px] h-[28.5px] w-[59.5px] rounded-[3px] bg-[#0c4195] text-white">Search</button>
        <button className="ml-[4px] h-[28.5px] w-[53px] rounded-[3px] border border-[#bbb] bg-white">Reset</button>
      </div>
      <div className="pt-[10px] text-[12.5px] leading-[17px] tracking-[-0.25px]">Ego Table:</div>
      <div className="mt-[6.5px] h-[1.6px] w-[375px] bg-[#777]" />
      <EgoTable />
      <nav className="mt-[16px] flex h-[24.5px] w-[290px] items-center overflow-hidden rounded-[3px] border border-[#ccc] text-[11.1px] tracking-[-0.2px] text-[#1450a0]">
        <span className={`w-[37px] text-[#777] ${page}`}>First</span>
        <span className={`w-[57px] text-[#777] ${page}`}>Previous</span>
        <span className="flex h-full w-[24.5px] items-center justify-center bg-[#0c4195] text-white">1</span>
        <span className={`w-[23.5px] ${page}`}>2</span>
        <span className={`w-[23.5px] ${page}`}>3</span>
        <span className={`w-[23.5px] ${page}`}>4</span>
        <span className={`w-[23.5px] ${page}`}>5</span>
        <span className={`w-[39px] ${page}`}>Next</span>
        <span className="flex h-full flex-1 items-center justify-center">Last</span>
      </nav>
    </aside>
  );
}

function Marker({ at, children }: { at: string; children: string }) {
  return (
    <div className={`absolute flex h-[44px] w-[44px] items-center justify-center rounded-full border-[1.6px] border-black bg-white pb-[4px] font-['Open_Sans','Noto_Sans',sans-serif] text-[26px] font-medium leading-none text-black [-webkit-text-stroke:0px] ${at}`}>
      {children}
    </div>
  );
}

export default function App() {
  return (
    <div className="relative flex h-[914px] w-[1949px] flex-col overflow-hidden bg-white pt-[13px] font-['Liberation_Sans',Arial,sans-serif] text-[#1a1a1a] [-webkit-text-stroke:0.3px]">
      <header className="ml-[6px] flex h-[42px] w-[1924px] shrink-0 items-center bg-[#0c4195] text-[12.3px] tracking-[-0.15px] text-white">
        <h1 className="ml-[25px] w-[1394px] text-[15px] leading-none tracking-normal"><b>egoSlider</b>: Visual Analysis of Egocentric Network Evolution</h1>
        <span className="w-[57px]">Dataset:</span>
        <div className="flex h-[28px] w-[114px] items-center justify-between rounded-[3px] bg-white pl-[8px] pr-[5px] text-[#1f1f1f]">
          <span>vis_graphic</span>
          <svg className="h-[10px] w-[6px]" viewBox="0 0 6 10" fill="#222"><path d="M3 0l3 4H0zM3 10l3-4H0z" /></svg>
        </div>
        <button className="ml-[13px] h-[28px] w-[71px] rounded-[3px] bg-white text-[#1f1f1f]">Overview</button>
        <button className="ml-[12px] h-[28px] w-[94px] whitespace-nowrap rounded-[3px] bg-white text-[#1f1f1f]">Control Panel</button>
        <a className="ml-[26px] text-[#a9c4ea] [-webkit-text-stroke:0px]">About Us</a>
        <a className="ml-[26px] text-[#a9c4ea] [-webkit-text-stroke:0px]">Help</a>
      </header>
      <div className="flex h-[856px] shrink-0 pl-[6px]">
        <section className="flex w-[266px] shrink-0 border-l-2 border-r border-[#dcdcdc]">
          <Overview />
        </section>
        <EgoPanel />
        <ControlPanel />
      </div>
      <div className="absolute left-[267.5px] top-[618px] h-[293px] w-[3.3px] bg-[#333]" />
      <Marker at="left-[16px] top-[68px]">a</Marker>
      <Marker at="left-[307.5px] top-[542.5px]">b</Marker>
      <Marker at="left-[1861px] top-[816px]">c</Marker>
      <Marker at="left-[1344px] top-[13px]">d</Marker>
    </div>
  );
}
